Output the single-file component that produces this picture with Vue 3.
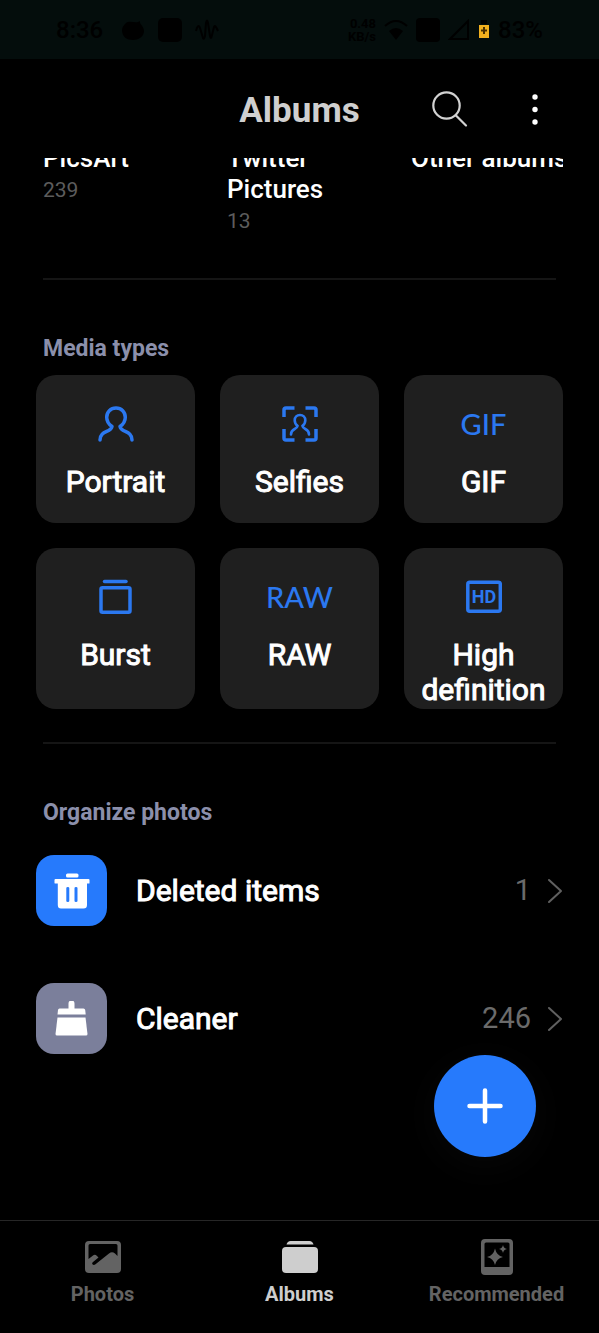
<script setup>
const albums = [
  { name: 'PicsArt', count: '239' },
  { name: 'Twitter Pictures', count: '13' },
  { name: 'Other albums', count: '' },
]

const mediaTypes = [
  { id: 'portrait', label: 'Portrait' },
  { id: 'selfies', label: 'Selfies' },
  { id: 'gif', label: 'GIF', glyph: 'GIF' },
  { id: 'burst', label: 'Burst' },
  { id: 'raw', label: 'RAW', glyph: 'RAW' },
  { id: 'hd', label: 'High definition' },
]

const tools = [
  { id: 'trash', label: 'Deleted items', count: '1' },
  { id: 'cleaner', label: 'Cleaner', count: '246' },
]

const tabs = [
  { id: 'photos', label: 'Photos' },
  { id: 'albums', label: 'Albums' },
  { id: 'recommended', label: 'Recommended' },
]
const activeTab = 'albums'
</script>

<template>
  <div class="screen">
    <div class="status">
      <div class="status-group">
        <span class="clock">8:36</span>
        <svg class="status-icon" width="24" height="24" viewBox="0 0 24 24" aria-hidden="true">
          <path d="M5 5C9 2 15 6 19 3C18 6 23 8 23 13C23 19 17 22 12 22C6 22 1 19 1 12C1 9 3 7 5 5Z" />
        </svg>
        <svg class="status-icon" width="26" height="26" viewBox="0 0 26 26" aria-hidden="true">
          <rect x="1" y="1" width="24" height="24" rx="5" />
        </svg>
        <svg class="status-line" width="24" height="24" viewBox="0 0 24 24" aria-hidden="true">
          <path d="M1 13Q3 5 5 10L8 20Q9 22 10 18L11 5Q12 0 13 5L15 18Q16 22 17 17L19 9Q20 6 23 13" />
        </svg>
      </div>
      <div class="status-group status-right">
        <span class="speed">0.48<br />KB/s</span>
        <svg class="status-icon" width="24" height="22" viewBox="0 0 24 22" aria-hidden="true">
          <path d="M12 21L5 12Q12 6 19 12Z" />
          <path class="status-line" d="M1 7Q12 -3 23 7" />
        </svg>
        <svg class="status-icon" width="24" height="24" viewBox="0 0 24 24" aria-hidden="true">
          <rect width="24" height="24" rx="4" />
        </svg>
        <svg class="status-line" width="22" height="22" viewBox="0 0 22 22" aria-hidden="true">
          <path d="M2 20L20 2V20Z" />
        </svg>
        <svg class="battery" width="12" height="20" viewBox="0 0 12 20" aria-hidden="true">
          <rect x="3" width="6" height="4" fill="#000" />
          <rect x="1" y="5" width="10" height="13" fill="#f2b01e" />
          <path d="M6 7V14M3 10.500H9" stroke="#4a3000" stroke-width="2" />
        </svg>
        <span class="clock">83%</span>
      </div>
    </div>

    <header class="header">
      <h1>Albums</h1>
      <div class="actions">
        <button type="button" aria-label="Search">
          <svg width="40" height="40" viewBox="0 0 40 40" fill="none" stroke="#d2d2d2" stroke-width="2.200" stroke-linecap="round">
            <circle cx="16.500" cy="14.500" r="13.200" />
            <path d="M26 24.500L36 34.500" />
          </svg>
        </button>
        <button type="button" aria-label="More options">
          <svg width="40" height="40" viewBox="0 0 40 40" fill="#fff">
            <circle cx="20" cy="6" r="2.700" />
            <circle cx="20" cy="18.500" r="2.700" />
            <circle cx="20" cy="31" r="2.700" />
          </svg>
        </button>
      </div>
    </header>

    <main class="content">
      <section class="albums">
        <a v-for="album in albums" :key="album.name" href="#" class="album">
          <span class="album-name">{{ album.name }}</span>
          <span class="album-count">{{ album.count }}</span>
        </a>
      </section>

      <hr />

      <section>
        <h2>Media types</h2>
        <div class="cards">
          <button v-for="type in mediaTypes" :key="type.id" type="button" class="card">
            <span class="card-icon">
              <span v-if="type.glyph" class="glyph" aria-hidden="true">{{ type.glyph }}</span>
              <svg v-else width="36" height="36" viewBox="0 0 36 36" fill="none" stroke="#2b78f0" stroke-width="3.500" stroke-linecap="round" stroke-linejoin="round" aria-hidden="true">
                <path v-if="type.id === 'portrait'" d="M2 34C2 24 13 27 14 20.500C10.500 18 8.700 15 8.700 11.200C8.700 6 12.500 2 18 2C23.500 2 27.300 6 27.300 11.200C27.300 15 25.500 18 22 20.500C23 27 34 24 34 34" />
                <g v-else-if="type.id === 'selfies'">
                  <g stroke-linecap="butt">
                    <path d="M2 11V4Q2 2 4 2H12.500M23.500 2H32Q34 2 34 4V11M34 23V32Q34 34 32 34H23.500M12.500 34H4Q2 34 2 32V23" />
                  </g>
                  <path stroke-width="2.600" d="M9 28.500C9 22 15 24 15.600 19.800C13.500 18.500 12.700 16.500 12.700 14.300C12.700 11 15 9 18 9C21 9 23.300 11 23.300 14.300C23.300 16.500 22.500 18.500 20.400 19.800C21 24 27 22 27 28.500" />
                </g>
                <g v-else-if="type.id === 'burst'">
                  <path d="M6.500 2.500H28" />
                  <rect x="3" y="8.800" width="29" height="24.500" rx="1.500" />
                </g>
                <g v-else>
                  <rect x="1.800" y="3.300" width="32.500" height="29" rx="2" />
                  <text x="18" y="24" text-anchor="middle" class="hd-text">HD</text>
                </g>
              </svg>
            </span>
            <span class="card-label">{{ type.label }}</span>
          </button>
        </div>
      </section>

      <hr class="after-cards" />

      <section>
        <h2>Organize photos</h2>
        <div class="tools">
          <a v-for="tool in tools" :key="tool.id" href="#" class="tool">
            <span class="tool-icon" :class="tool.id">
              <svg v-if="tool.id === 'trash'" width="36" height="36" viewBox="0 0 36 36" fill="#fff" aria-hidden="true">
                <rect x="12" y="0.500" width="12.500" height="4" rx="1.500" />
                <path fill-rule="evenodd" d="M1.500 6H34.500Q35.500 6 35.500 7V10Q35.500 10.500 35 10.500H33V32Q33 35.500 29.500 35.500H7Q3.800 35.500 3.800 32V10.500H1.500Q.5 10.500 .5 10V7Q.5 6 1.500 6ZM12.300 15V28Q12.300 29 13.800 29Q15.300 29 15.300 28V15Q15.300 14 13.800 14Q12.300 14 12.300 15ZM20.500 15V28Q20.500 29 22 29Q23.500 29 23.500 28V15Q23.500 14 22 14Q20.500 14 20.500 15Z" />
              </svg>
              <svg v-else width="36" height="36" viewBox="0 0 36 36" fill="#fff" aria-hidden="true">
                <path d="M14.500 7.500V2.500A3 3 0 0 1 20.500 2.500V7.500H29.500Q31 7.500 31.200 9L31.700 13.500H3.500L4 9Q4.200 7.500 5.500 7.500Z" />
                <path d="M3.500 16.500H31.500L33.500 33Q33.500 34.500 32 34.500H3Q1.500 34.500 1.500 33Z" />
              </svg>
            </span>
            <span class="tool-label">{{ tool.label }}</span>
            <span class="tool-count">{{ tool.count }}</span>
            <svg class="chevron" width="16" height="26" viewBox="0 0 16 26" fill="none" stroke="#606060" stroke-width="2" stroke-linecap="round" stroke-linejoin="round" aria-hidden="true">
              <path d="M2 2L14 13L2 24" />
            </svg>
          </a>
        </div>
      </section>
    </main>

    <button type="button" class="fab" aria-label="New album">
      <svg width="36" height="36" viewBox="0 0 36 36" stroke="#fff" stroke-width="4.500" stroke-linecap="round" aria-hidden="true">
        <path d="M18 2.500V33.500M2.500 18H33.500" />
      </svg>
    </button>

    <nav class="tabs">
      <a v-for="tab in tabs" :key="tab.id" href="#" class="tab" :class="{ active: tab.id === activeTab }">
        <svg width="36" height="36" viewBox="0 0 36 36" fill="currentColor" aria-hidden="true">
          <path v-if="tab.id === 'photos'" fill-rule="evenodd" d="M4 2H32Q36 2 36 6V30Q36 34 32 34H4Q0 34 0 30V6Q0 2 4 2ZM5 5Q3.500 5 3.500 6.500V20L8 16.500Q10 15 12 17L13.500 18.500L8 23Q6.500 24.300 7.700 25.500Q8.800 26.500 10.500 25.300L24 14.500Q27 12 30 14.500L32.500 17V6.500Q32.500 5 31 5Z" />
          <g v-else-if="tab.id === 'albums'">
            <path d="M4.500 5.500Q5.500 2 8.500 2H27.500Q30.500 2 31.500 5.500Z" />
            <rect x="0" y="8" width="36" height="26" rx="4" />
          </g>
          <g v-else>
            <path fill-rule="evenodd" d="M6 0H30Q34 0 34 4V32Q34 36 30 36H6Q2 36 2 32V4Q2 0 6 0ZM7 3.500Q5.500 3.500 5.500 5V28H30.500V5Q30.500 3.500 29 3.500Z" />
            <path d="M16 9.500Q17.500 16.500 24 18Q17.500 19.500 16 26Q14.500 19.500 8 18Q14.500 16.500 16 9.500ZM24 6Q24.700 9.300 28 10Q24.700 10.700 24 14Q23.300 10.700 20 10Q23.300 9.300 24 6Z" />
          </g>
        </svg>
        <span>{{ tab.label }}</span>
      </a>
    </nav>
  </div>
</template>

<style>
body {
  background: #000;
}
</style>

<style scoped>
.screen {
  position: relative;
  display: flex;
  flex-direction: column;
  min-height: 100vh;
  background: #000;
  color: #fff;
  font-family: Roboto, "Liberation Sans", sans-serif;
}
.screen *,
.screen {
  box-sizing: border-box;
}
button {
  padding: 0;
  border: 0;
  background: none;
  color: inherit;
  font: inherit;
}
a {
  color: inherit;
  text-decoration: none;
}
svg {
  display: block;
  flex: none;
}
.status {
  display: flex;
  justify-content: space-between;
  align-items: center;
  height: 59px;
  padding: 0 56px;
  background: #040d0c;
  color: #000;
}
.status-group {
  display: flex;
  align-items: center;
  gap: 12px;
}
.status-right {
  gap: 8px;
}
.clock {
  margin-right: 6px;
  font-size: 24px;
  font-weight: 500;
}
.status-right .clock {
  margin: 0;
}
.speed {
  font-size: 13px;
  line-height: 13px;
  font-weight: 700;
  text-align: right;
}
.status-line {
  fill: none;
  stroke: #000;
  stroke-width: 2;
}
.header {
  display: grid;
  grid-template-columns: 1fr auto 1fr;
  align-items: center;
  height: 99px;
  padding: 4px 44px 0 0;
}
h1 {
  grid-column: 2;
  margin: 0 0 0 44px;
  color: #cfcfcf;
  font-size: 35px;
  line-height: 40px;
  font-weight: 700;
}
.actions {
  display: flex;
  justify-content: flex-end;
  gap: 45px;
}
.content {
  flex: 1;
  overflow: hidden;
  padding: 0 36px;
}
.albums {
  display: grid;
  grid-template-columns: repeat(3, 1fr);
  gap: 25px;
  margin-top: -15px;
}
.album {
  overflow: hidden;
  padding-left: 7px;
}
.album-name {
  display: block;
  font-size: 26px;
  line-height: 31px;
  font-weight: 500;
}
.album:last-child .album-name {
  white-space: nowrap;
}
.album-count {
  display: block;
  color: #5c5c5c;
  font-size: 21px;
  line-height: 32px;
}
hr {
  height: 2px;
  margin: 41px 7px 55px;
  border: 0;
  background: #151515;
}
hr.after-cards {
  margin-top: 33px;
}
h2 {
  margin: 0 7px;
  color: #8b8fab;
  font-size: 23px;
  line-height: 28px;
  font-weight: 700;
}
.cards {
  display: grid;
  grid-template-columns: repeat(3, 1fr);
  gap: 25px;
  margin-top: 12px;
}
.card {
  display: flex;
  flex-direction: column;
  align-items: center;
  gap: 22px;
  min-height: 148px;
  padding: 31px 8px 2px;
  border-radius: 20px;
  background: #1f1f1f;
}
.card-icon {
  display: flex;
  align-items: center;
  justify-content: center;
  height: 36px;
}
.glyph {
  color: #2b78f0;
  font-family: Lato, sans-serif;
  font-size: 29px;
  line-height: 36px;
  font-weight: 500;
}
.hd-text {
  fill: #2b78f0;
  stroke: none;
  font-family: Roboto, sans-serif;
  font-size: 18px;
  font-weight: 700;
}
.card-label,
.tool-label {
  font-size: 30px;
  line-height: 35px;
  font-weight: 400;
  -webkit-text-stroke: 1px #fff;
}
.tools {
  display: grid;
  gap: 57px;
  margin-top: 28px;
}
.tool {
  display: flex;
  align-items: center;
}
.tool-icon {
  display: flex;
  align-items: center;
  justify-content: center;
  width: 71px;
  height: 71px;
  margin-right: 29px;
  border-radius: 18px;
}
.trash {
  background: #267afc;
}
.cleaner {
  background: #7b7f9b;
}
.tool-label {
  flex: 1;
}
.tool-count {
  color: #6b6b6b;
  font-size: 29px;
  line-height: 35px;
}
.chevron {
  margin-left: 16px;
}
.fab {
  position: absolute;
  right: 63px;
  bottom: 176px;
  display: flex;
  align-items: center;
  justify-content: center;
  width: 102px;
  height: 102px;
  border-radius: 50%;
  background: #267afc;
  box-shadow: 0 8px 40px rgba(255, 255, 255, 0.03);
}
.tabs {
  display: grid;
  grid-template-columns: repeat(3, 1fr);
  height: 113px;
  padding: 18px 4px 0;
  border-top: 1px solid #262626;
}
.tab {
  display: flex;
  flex-direction: column;
  align-items: center;
  gap: 7px;
  color: #636363;
  font-size: 20px;
  line-height: 24px;
  font-weight: 700;
}
.active {
  color: #cecece;
}
</style>
